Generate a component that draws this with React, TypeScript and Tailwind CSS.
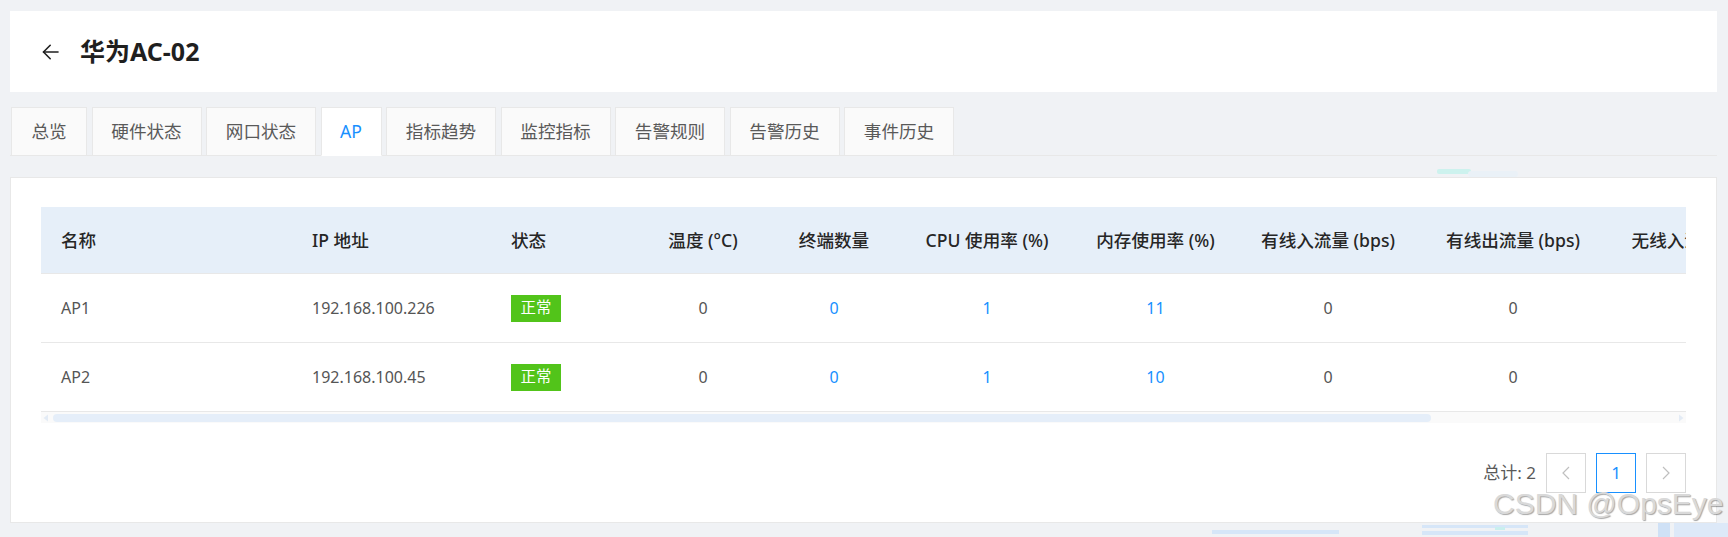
import React from "react";

const FONT = "font-['Noto_Sans','Noto_Sans_CJK_SC',sans-serif]";

const tabs = [
  { label: "总览", w: "w-[76px]" },
  { label: "硬件状态", w: "w-[110px]" },
  { label: "网口状态", w: "w-[110px]" },
  { label: "AP", w: "w-[61px]", active: true },
  { label: "指标趋势", w: "w-[110px]" },
  { label: "监控指标", w: "w-[110px]" },
  { label: "告警规则", w: "w-[110px]" },
  { label: "告警历史", w: "w-[110px]" },
  { label: "事件历史", w: "w-[110px]" },
];

type Col = { title: string; w: string; align: "left" | "center"; blue?: boolean };

const cols: Col[] = [
  { title: "名称", w: "w-[251px]", align: "left" },
  { title: "IP 地址", w: "w-[199px]", align: "left" },
  { title: "状态", w: "w-[150px]", align: "left" },
  { title: "温度 (°C)", w: "w-[124px]", align: "center" },
  { title: "终端数量", w: "w-[138px]", align: "center", blue: true },
  { title: "CPU 使用率 (%)", w: "w-[168px]", align: "center", blue: true },
  { title: "内存使用率 (%)", w: "w-[169px]", align: "center", blue: true },
  { title: "有线入流量 (bps)", w: "w-[176px]", align: "center" },
  { title: "有线出流量 (bps)", w: "w-[194px]", align: "center" },
  { title: "无线入流量 (bps)", w: "w-[177px]", align: "center" },
  { title: "无线出流量 (bps)", w: "w-[180px]", align: "center" },
];

const rows: (string | number)[][] = [
  ["AP1", "192.168.100.226", "正常", 0, 0, 1, 11, 0, 0, 0, 0],
  ["AP2", "192.168.100.45", "正常", 0, 0, 1, 10, 0, 0, 0, 0],
];

function BackArrow() {
  return (
    <svg width="17" height="16" viewBox="0 0 17 16" fill="none" stroke="#1f1f1f" strokeWidth="1.6" strokeLinecap="round" strokeLinejoin="round">
      <path d="M16 8H1.5" />
      <path d="M8.2 1.3L1.5 8l6.7 6.7" />
    </svg>
  );
}

function Background() {
  return (
    <svg className="absolute left-0 top-0 pointer-events-none" width="1728" height="537" viewBox="0 0 1728 537">
      <rect x="1437" y="169" width="34" height="5" rx="2" fill="#cdf2ee" />
      <rect x="1468" y="171" width="50" height="6" rx="3" fill="#eaf1f7" />
      <rect x="1212" y="530" width="127" height="4" fill="#d6e6f8" />
      <rect x="1422" y="525" width="106" height="3" fill="#d6e6f8" />
      <rect x="1422" y="531" width="106" height="4" fill="#d6e6f8" />
      <rect x="1495" y="527" width="10" height="3" fill="#c9efee" />
      <rect x="1658" y="523" width="12" height="14" fill="#cfe1f6" />
      <rect x="1674" y="523" width="54" height="14" fill="#dde9f8" />
    </svg>
  );
}

export default function App() {
  return (
    <div className={`relative w-full h-[537px] overflow-hidden bg-[#f0f2f5] pl-[10px] pr-[11px] pt-[11px] ${FONT}`}>
      <Background />
      <div className="relative flex flex-col">
        {/* Header */}
        <div className="flex h-[81px] items-center bg-white pl-[32px]">
          <BackArrow />
          <div className="ml-[21px] text-[25px] font-bold leading-none text-[#1f1f1f]">华为AC-02</div>
        </div>

        {/* Tabs */}
        <div className="mt-[15px] flex h-[49px] items-start gap-[4.5px] border-b border-[#e8e8e8] pl-px">
          {tabs.map((t) => (
            <div
              key={t.label}
              className={`${t.w} flex h-[49px] shrink-0 items-center justify-center border text-[17.6px] ${
                t.active
                  ? "border-[#e8e8e8] border-b-white bg-white text-[#1890ff]"
                  : "border-[#e8e8e8] bg-[#fafafa] text-[#595959]"
              }`}
            >
              {t.label}
            </div>
          ))}
        </div>

        {/* Content card */}
        <div className="mt-[21px] border border-[#e8e8e8] bg-white px-[30px] pt-[29px] pb-[29px]">
          <div className="overflow-hidden">
            <div className="w-[1926px]">
              <div className="flex h-[67px] items-center border-b border-[#e8e8e8] bg-[#e6eff9]">
                {cols.map((c) => (
                  <div
                    key={c.title}
                    className={`${c.w} shrink-0 whitespace-nowrap text-[17.6px] font-medium text-[#262626] ${
                      c.align === "left" ? "pl-[20px] text-left" : "text-center"
                    }`}
                  >
                    {c.title}
                  </div>
                ))}
              </div>
              {rows.map((r, ri) => (
                <div key={ri} className="flex h-[69px] items-center border-b border-[#e8e8e8]">
                  {cols.map((c, ci) => (
                    <div
                      key={c.title}
                      className={`${c.w} shrink-0 whitespace-nowrap text-[16px] ${
                        c.align === "left" ? "pl-[20px] text-left" : "text-center"
                      } ${c.blue ? "text-[#1890ff]" : "text-[#555555]"}`}
                    >
                      {ci === 2 ? (
                        <span className="inline-flex h-[27px] w-[50px] items-center justify-center bg-[#52c41a] text-[15.4px] text-white">
                          {r[ci]}
                        </span>
                      ) : (
                        r[ci]
                      )}
                    </div>
                  ))}
                </div>
              ))}
            </div>
            {/* Scrollbar */}
            <div className="flex h-[11px] items-center bg-[#fafafa] px-[2px]">
              <svg width="6" height="8" viewBox="0 0 6 8">
                <path d="M5 0.5v7L0.5 4z" fill="#e3ebf5" />
              </svg>
              <div className="ml-[4px] h-[8px] w-[1378px] rounded-full bg-[#e5eef9]" />
              <div className="flex-1" />
              <svg width="6" height="8" viewBox="0 0 6 8">
                <path d="M1 0.5v7L5.5 4z" fill="#e3ebf5" />
              </svg>
            </div>
          </div>

          {/* Pagination */}
          <div className="mt-[30px] flex h-[40px] items-center justify-end">
            <span className="mr-[10px] text-[17px] text-[#595959]">总计: 2</span>
            <div className="flex h-[40px] w-[40px] items-center justify-center border border-[#d9d9d9] bg-white">
              <svg width="10" height="14" viewBox="0 0 10 14" fill="none" stroke="#bfbfbf" strokeWidth="1.2">
                <path d="M8 1L2 7l6 6" />
              </svg>
            </div>
            <div className="ml-[10px] flex h-[40px] w-[40px] items-center justify-center border border-[#1890ff] bg-white text-[17px] text-[#1890ff]">
              1
            </div>
            <div className="ml-[10px] flex h-[40px] w-[40px] items-center justify-center border border-[#d9d9d9] bg-white">
              <svg width="10" height="14" viewBox="0 0 10 14" fill="none" stroke="#bfbfbf" strokeWidth="1.2">
                <path d="M2 1l6 6-6 6" />
              </svg>
            </div>
          </div>
        </div>
      </div>

      {/* Watermark */}
      <div className="absolute left-[1493px] top-[489px] whitespace-nowrap font-['Liberation_Sans',Arial,sans-serif] text-[30px] leading-[30px] text-[#d9d9d9] [text-shadow:1px_1px_1px_rgba(0,0,0,0.35)]">
        CSDN @OpsEye
      </div>
    </div>
  );
}
